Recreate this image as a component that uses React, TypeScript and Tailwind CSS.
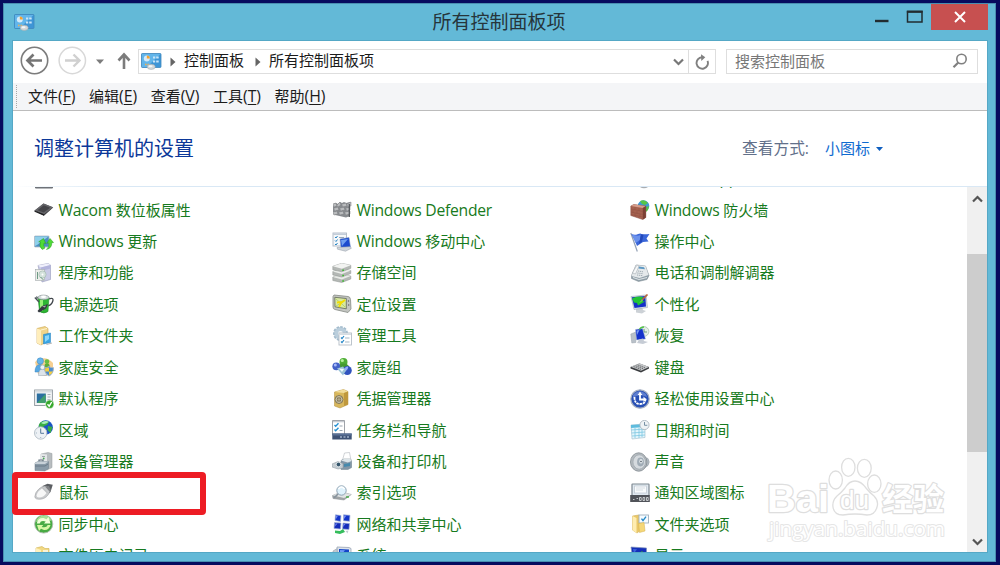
import type { ReactNode } from "react";

const icons: Record<string, ReactNode> = {
  drive: <path d="M1 16h18v2.200q0 1.300-1 1.300H2q-1 0-1-1.300z" fill="#6e7278" />,
  globe: <circle cx="14" cy="12.500" r="6.800" fill="#a9adb2" />,
  tablet: (
    <>
      <path d="M.5 10.800 9.500 3.500l9.700 4-9.200 8.200z" fill="#3c3c3f" />
      <path d="M.5 10.500 9.500 3.500l9.700 3.700-9.200 7z" fill="#66666a" />
      <path d="M3.500 10.200 9.700 5.200l6.500 2.600-6.500 4.800z" fill="#454549" />
      <path d="m.5 10.500 9.500 3.700v1.600l-9.500-4z" fill="#202022" />
    </>
  ),
  update: (
    <>
      <rect x=".5" y="4" width="14.500" height="11" rx=".6" fill="#4b8fc4" stroke="#b4bec6" strokeWidth=".8" />
      <path d="M1 4.500h13.500L3 13l-2 1z" fill="#8fd0ea" />
      <path d="M8.300 17.500Q4.500 14.500 6.500 10l-1.800-.2L9.500 6.500l2.300 5-1.800-.5q-1 2.800 1 5z" fill="#4edb36" stroke="#279c1d" strokeWidth=".5" />
      <path d="M12.500 17.500q3-2.500 2.300-6.500l-2 .3L16 6.500l3.500 4-1.700.2q.2 5.500-5.300 6.800z" fill="#4edb36" stroke="#279c1d" strokeWidth=".5" />
    </>
  ),
  programs: (
    <>
      <path d="m4 2.500 10-2L16.500 2v14.500L8 19z" fill="#c9cbe6" stroke="#9698ba" strokeWidth=".6" />
      <path d="m4 2.500 10-2L16.500 2 7 4.500z" fill="#f0f0fb" />
      <path d="M7 4.500 16.500 2v3.500L7 8z" fill="#b3b4dc" />
      <rect x="1.500" y="6.500" width="9" height="11" fill="#eceeea" stroke="#a4abac" strokeWidth=".6" />
      <circle cx="8.500" cy="11.500" r="3.600" fill="#d4e2dc" stroke="#9bb3a8" strokeWidth=".6" />
      <circle cx="8.500" cy="11.500" r="1" fill="#fff" />
      <path d="M3.500 9v7m3-2 3 3" stroke="#6d9b84" />
    </>
  ),
  power: (
    <>
      <path d="M14.500 5q5.500-2 4.300 2-.8 3.500-4.800 5" fill="none" stroke="#41464b" strokeWidth="1.300" />
      <path d="M4 3.500h11l-1 14q-4 3-8.500 0z" fill="#2db633" stroke="#1d8023" strokeWidth=".5" />
      <path d="M6 6v10l3 1V6z" fill="#97f176" />
      <ellipse cx="9.500" cy="3.400" rx="5.500" ry="2.300" fill="#d5dcdd" stroke="#7c8689" strokeWidth=".6" />
      <ellipse cx="9.500" cy="2.800" rx="2.500" ry="1.200" fill="#fff" />
      <path d="M.8 3.500 5 8M2.500 2.500l1 2" stroke="#4a5158" strokeWidth="1.300" />
      <path d="m8 12 6-2-2 4.500-7 4L3.500 17z" fill="#343940" />
      <path d="m8 12.500 4-1-1 2z" fill="#a5aab0" />
    </>
  ),
  workFolder: (
    <>
      <path d="M3 2.500 11 .5l3 2V15l-7 4-4-2z" fill="#f1d58b" stroke="#cda64e" strokeWidth=".6" />
      <path d="M3 2.500 7 4v15l-4-2z" fill="#ffeebc" />
      <path d="m7 4 6-1.500" stroke="#fff4cf" />
      <path d="M9.500 8.500 16.500 7v9.500L9.500 18z" fill="#3aa5e2" stroke="#1f7dbf" strokeWidth=".5" />
      <path d="m11 10 4-1v4L11 16z" fill="#8bd6fa" />
      <path d="M12.500 18.500 18 17" stroke="#b5b5b5" />
    </>
  ),
  family: (
    <>
      <path d="M1 5q10-8 18 1v8l-7 5-8-2z" fill="#f6cf91" />
      <path d="M1 15q0-7.500 5-7.500t5 7.500z" fill="#56a8e2" stroke="#3d86c0" strokeWidth=".5" />
      <circle cx="6.300" cy="4" r="3.200" fill="#66b6eb" stroke="#3d86c0" strokeWidth=".5" />
      <path d="M10 12q0-6 3-6t3 6z" fill="#5cae38" />
      <circle cx="13" cy="4.500" r="2.300" fill="#66bd42" />
      <path d="M4.500 18.500q0-6.500 4-6.500t4 6.500z" fill="#dce4eb" stroke="#93a1ad" strokeWidth=".5" />
      <circle cx="8.500" cy="10.300" r="2.300" fill="#eef3f7" stroke="#93a1ad" strokeWidth=".5" />
      <path d="M15 9.500q2 1.500 4.500 1.200 0 6-4.500 8.300-4.500-2.300-4.500-8.300Q13 11 15 9.500z" fill="#4a8ccf" stroke="#a9b6c1" />
      <path d="M15 10.500v4h-3.700l-.3-3zM15 14.500h3.700Q18 17 15 18z" fill="#f7cf3e" />
    </>
  ),
  defaults: (
    <>
      <rect x=".6" y="1" width="17.800" height="15.500" fill="#f2f4f5" stroke="#8d969c" strokeWidth=".9" />
      <path d="M1 1.500h17v2H1z" fill="#d7dde1" />
      <rect x="2.800" y="4.500" width="9" height="9.500" fill="#2b6fa0" />
      <path d="m3 14 8.500-9v9z" fill="#41a06c" />
      <path d="M13.500 5.500h3M13.500 8h3M13.500 10.500h3" stroke="#a8b1b8" />
      <circle cx="15.700" cy="15.300" r="4.200" fill="#35a82a" stroke="#dcf0d8" strokeWidth=".7" />
      <path d="m13.500 15.300 1.700 1.900 2.500-4.200" fill="none" stroke="#fff" strokeWidth="1.400" />
    </>
  ),
  region: (
    <>
      <circle cx="11.700" cy="7.500" r="7.200" fill="#1a54c4" />
      <path d="M7 2q5-2 8 0l-2 3-3 1-1 3-4-1q-1-4 2-6zM14 6l4.500 1-2 6-3-3z" fill="#3aae45" />
      <path d="M7 3q4-3.500 8-1.200-4 3.500-8 1.200z" fill="#a8ecbc" />
      <circle cx="6.700" cy="13" r="6.200" fill="#edf1f5" stroke="#a9b5bf" strokeWidth=".8" />
      <path d="M6.700 9v4.300H10" fill="none" stroke="#56789b" />
      <path d="M6.700 8v1M6.700 17v1M1.900 13h1" stroke="#8199ae" strokeWidth=".7" />
    </>
  ),
  devices: (
    <>
      <path d="m7 2 7-1.500 4 1v14L13 18 7 16z" fill="#b8bdc0" stroke="#949a9d" strokeWidth=".5" />
      <path d="m6.500 2 6.500.5V18l-6.500-2z" fill="#e4e7e8" />
      <path d="M8 4.500h3" stroke="#9aa2a6" />
      <circle cx="9.700" cy="6.500" r=".9" fill="#44a750" />
      <path d="M5 10V8h4v2" fill="none" stroke="#5f6f7a" strokeWidth="1.200" />
      <path d="m1 11 3-1.500h10.500v7L11 19l-10-.5z" fill="#8a9ba8" stroke="#6d7d88" strokeWidth=".5" />
      <path d="m1 11 3-1.500h10.500L11 12H1z" fill="#c8d1d8" />
      <path d="M1 14h10l3-2" fill="none" stroke="#6a7b88" />
    </>
  ),
  mouse: (
    <>
      <path d="m8.500 3 5-2.200 5.300 1L16.500 9l-3.500 3z" fill="#5b5e62" />
      <path d="M.8 13.500q.2-4 4.200-7.700Q8 2.500 12.500 3.200L16 8q-2 6.500-8 8-7.200 1.200-7.200-2.500z" fill="#c8cacc" stroke="#97999c" strokeWidth=".5" />
      <path d="M2.500 12.500q1-4.500 5.500-7l4.500 4.500q-3 4.500-7.500 4.500-2.500 0-2.500-2z" fill="#f7f7f7" />
      <path d="m8 4 5.500 6" stroke="#b5b7b9" strokeWidth=".7" />
      <path d="m11 3.500 4.500 5 1.500-1-2-4.500z" fill="#808386" />
    </>
  ),
  sync: (
    <>
      <circle cx="9.700" cy="10" r="9.100" fill="#48ab43" stroke="#b5beb5" strokeWidth=".9" />
      <path d="M2 8q1-6 8-6.500 6 0 7.500 5.500Q10 4 2 8z" fill="#a5e096" />
      <path d="M2.800 9.500Q4 3.800 9.500 4.100l3 1.200L14.500 3l2 6.500H10l1.700-2q-5-1.600-6 2z" fill="#f1ffd8" />
      <path d="M16.500 11Q15 16.500 10 16l-3-1.200L5 17l-2-6h6.300l-1.600 2q5 1.200 6-2z" fill="#d8f8a5" />
    </>
  ),
  history: (
    <>
      <path d="M2 2 8 .5l3 2h4v16H5l-3-3z" fill="#f2d983" stroke="#cfb253" strokeWidth=".6" />
      <path d="m2 2 5 2v15l-5-2z" fill="#fff1bc" />
      <path d="M9 4h5v8H9z" fill="#faf3d7" />
    </>
  ),
  defender: (
    <>
      <path d="m1 4 3-1 2 1 2-2 2 1 2-1 2 1 4-1v14l-4 1.500-13-3z" fill="#888b8f" />
      <path d="m1 4 3-1 1 3-3 1M5 5l3-3 1 3-3 2M10 4l4-1 1 3-4 1M15 4l4-2v4l-3 1M2 8l4-1 1 3-4 1M8 8l4-1 1 3-4 1M14 8l4-1v3l-3 1M1 12l4-1 1 3-4 1M7 12l4-1 1 3-4 1M13 12l5-1v3l-4 1" fill="#babcbe" stroke="#74777a" strokeWidth=".5" />
      <path d="M17.300 4v13" stroke="#55595d" strokeWidth="1.300" />
    </>
  ),
  mobility: (
    <>
      <rect x="1" y="1" width="13.500" height="13" fill="#f6f8fa" stroke="#adb7c3" strokeWidth=".9" />
      <path d="M1 1.500h13V3H1z" fill="#c3cdd8" />
      <path d="m3 5 1 1 1.500-2M3 8.500l1 1 1.500-2M3 12l1 1 1.500-2" fill="none" stroke="#2583c3" />
      <path d="M7 5.500h5" stroke="#7c91a6" strokeWidth=".8" />
      <path d="m8 7 9-1.500 1.500 9.500-9.500.5z" fill="#1b4ace" stroke="#8398c2" strokeWidth=".5" />
      <path d="m9 8 7-1-6 7z" fill="#6f9ff0" />
      <path d="m5 15.500 13-.8 1.500 1.500-6 3-8-2z" fill="#ced4da" stroke="#929ba6" strokeWidth=".5" />
    </>
  ),
  storage: (
    <>
      <path d="m.8 14 9-3 9 2v3l-9 3.500-9-2z" fill="#b4b8b5" stroke="#8d928e" strokeWidth=".5" />
      <path d="m.8 14 9-3 9 2-9 3.500z" fill="#e9ebe8" />
      <path d="m.8 8.500 9-3 9 2v3l-9 3.500-9-2z" fill="#b4b8b5" stroke="#8d928e" strokeWidth=".5" />
      <path d="m.8 8.500 9-3 9 2-9 3.500z" fill="#eceeeb" />
      <path d="m.8 3.300 9-3 9 2v3l-9 3.500-9-2z" fill="#b4b8b5" stroke="#8d928e" strokeWidth=".5" />
      <path d="m.8 3.300 9-3 9 2-9 3.500z" fill="#f2f3f1" />
      <path d="M10.300 7.300h1.600M10.300 12.500h1.600M10.300 18h1.600" stroke="#38b82b" strokeWidth="1.500" />
    </>
  ),
  location: (
    <>
      <path d="M2 1 16 2.500q2 0 2.500 3l.5 9.500-3 3.500-13-3Q1 15 1 13V2.500z" fill="#c3c5c1" stroke="#858a84" strokeWidth=".8" />
      <path d="m2.800 3.300 11.500 1.200v10.300L3 12.800z" fill="#d8e9a0" stroke="#5f6757" strokeWidth=".8" />
      <path d="m4 5 4 3.500L13 6M4 12l5-3 4 4" fill="none" stroke="#a9c66e" strokeWidth=".8" />
      <path d="m5 8.500 4.500-.5L7 13M9 9l4-3" fill="none" stroke="#f4dc00" strokeWidth="1.800" />
      <circle cx="16.500" cy="7" r=".7" fill="#5b605b" />
      <circle cx="16.700" cy="11" r=".7" fill="#5b605b" />
    </>
  ),
  admin: (
    <>
      <circle cx="8.500" cy="7.500" r="6.500" fill="#bed1de" stroke="#a4bccd" strokeWidth="2" strokeDasharray="2.500 1.200" />
      <circle cx="8.500" cy="7.500" r="5.900" fill="#bacedc" />
      <circle cx="8.500" cy="7.500" r="2.400" fill="#f5f8fa" />
      <rect x="7" y="7" width="12.500" height="12" fill="#fff" stroke="#b5bec7" strokeWidth=".9" />
      <path d="M7.500 7.500h11.500V9H7.500z" fill="#d5dde3" />
      <path d="m9 11.500 1 1 2-2.500M9 15.500l1 1 2-2.500" fill="none" stroke="#2386c7" strokeWidth="1.200" />
      <path d="M13 12h4.500M13 16h4.500" stroke="#a5b7c5" />
    </>
  ),
  homegroup: (
    <>
      <circle cx="11.500" cy="5" r="4" fill="#4fae36" />
      <path d="M5.500 12q0-5.500 6-5.500t6 5.500l-5 3z" fill="#459a31" />
      <circle cx="10.300" cy="3.500" r="1.600" fill="#b8ef9e" />
      <circle cx="4.300" cy="9.300" r="3.900" fill="#4261c7" />
      <circle cx="3.300" cy="8" r="1.500" fill="#a7b9fa" />
      <circle cx="15.300" cy="13.500" r="4.500" fill="#3153be" />
      <path d="M11.800 13q1-3.500 4.200-3.500 1 2.500-4 6z" fill="#94aafa" />
      <path d="m5 11.500 6-2 3 4-3 5z" fill="#9bc3d7" />
      <path d="m7 11.500 5 .5-2 3z" fill="#eef9ff" />
    </>
  ),
  credential: (
    <>
      <path d="m2.500 3 9-2.500 4.500 2v13L8 19l-5.500-2z" fill="#d8b75c" stroke="#b08d38" strokeWidth=".5" />
      <path d="m2.500 3 9-2.500 4.500 2L12 4z" fill="#f1dc9a" />
      <path d="m12 4 4-1.500v13L12 17z" fill="#bf983d" />
      <circle cx="7" cy="10.500" r="4" fill="#c9c2a9" stroke="#7a6f50" strokeWidth=".9" />
      <circle cx="7" cy="10.500" r="1.700" fill="#f0ead4" stroke="#6a5e3c" strokeWidth=".9" />
      <path d="m4.500 8 5 5m0-5-5 5" stroke="#766942" strokeWidth=".6" />
    </>
  ),
  taskbar: (
    <>
      <path d="M.5.500h12v14H.5z" fill="#fff" stroke="#94989f" strokeWidth=".9" />
      <path d="M1 1h11v1.300H1z" fill="#c8ccd2" />
      <path d="m2.500 5 1.200 1.300L6.500 3.300M2.500 9.500l1.200 1.300L6.500 7.800" fill="none" stroke="#2791d2" strokeWidth="1.400" />
      <path d="M7.500 6h3M7.500 10.500h3" stroke="#9ba7b1" />
      <path d="M.3 13.500h19.400v6H.3z" fill="#3e5275" />
      <path d="M.3 13.500h19.400v2H.3z" fill="#5a7196" />
      <path d="M8 17h2M11.500 17h2M15 17h2" stroke="#9fb0c8" strokeWidth="1.500" />
    </>
  ),
  printer: (
    <>
      <path d="m10.500 8 2-7 5-.5 1.500 8z" fill="#fff" stroke="#b1b7bc" strokeWidth=".6" />
      <path d="m9 8.500 3-1.500h6.500l1.200 2v6.500L16 17.500H9z" fill="#8297a7" stroke="#71818a" strokeWidth=".5" />
      <path d="m9 8.500 3-1.500h6.500l1.200 2-4 1.500z" fill="#dce4e8" />
      <path d="m0 12 6-2.500 5 2v4.500l-5 1-6-2z" fill="#c5cdd2" stroke="#8a959c" strokeWidth=".5" />
      <circle cx="6.500" cy="12.500" r="2.300" fill="#35556b" stroke="#dce3e7" strokeWidth=".9" />
      <path d="m12 12 6-1v3l-6 1z" fill="#4689ac" />
    </>
  ),
  indexing: (
    <>
      <path d="m.5 12.500 9-3.500 9.800 2.500-7.300 5.500L1 15.500z" fill="#9fa4a6" stroke="#868c90" strokeWidth=".5" />
      <path d="m.5 12.300 9-3.300 9.800 2.500-7.300 3.500z" fill="#e1e4e5" />
      <path d="M14 14h3" stroke="#3aa73a" strokeWidth="1.300" />
      <circle cx="9.500" cy="7.500" r="4.700" fill="#dff2fc" stroke="#8fa3b3" />
      <path d="M6.500 6q3-4 6 0" fill="none" stroke="#fff" strokeWidth="1.300" />
      <path d="m6 11-4 4" stroke="#86929d" strokeWidth="1.700" />
    </>
  ),
  network: (
    <>
      <path d="m3.500.8 5.500.7-.5 6L3 6.500zM11.500.8l6.500.5-.5 6-6-.5z" fill="#1435c8" stroke="#a3b3d6" strokeWidth=".7" />
      <path d="m2.500 8.500 6.500.5-.5 6-6.500-.5zM11 9l6.500.5-.5 6-6.500-.5z" fill="#142cb9" stroke="#a3b3d6" strokeWidth=".7" />
      <path d="m4 1.500 2 .3L4 5zM12 1.500h2.500L12 5zM3.500 9.500h2l-2.500 3zM11.500 10h2l-2.500 3z" fill="#748af2" />
      <path d="m3 16.500 5 .5 3-2 2 3-5 2-5-1z" fill="#35bd5c" />
      <path d="m13.500 17 3-.5-1 3" fill="#c4ccd4" />
    </>
  ),
  system: (
    <>
      <path d="m1 5 5-3v14H1z" fill="#c3cad1" stroke="#99a1aa" strokeWidth=".6" />
      <path d="m5 1 12 .5 2 1v14H6z" fill="#dce3eb" stroke="#9aa5b4" strokeWidth=".8" />
      <path d="m7 3 10 .5v11L7 14z" fill="#1444c9" />
      <path d="m8 4 5 .3-5 6z" fill="#6e9bf5" />
    </>
  ),
  firewall: (
    <>
      <circle cx="13.500" cy="6" r="5.800" fill="#3f9ad4" />
      <path d="M10 1q5-2 8 2l-3 2-3-1zM16 7l3-1-1 4-2 2z" fill="#57c546" />
      <path d="m.8 6 3-1.500 12 1.500v11.500L12.800 19.500l-12-4z" fill="#a5614f" stroke="#83493d" strokeWidth=".5" />
      <path d="m.8 6 3-1.500 12 1.500-3 2z" fill="#d69d8b" />
      <path d="m12.800 8 3-2v11.500l-3 2z" fill="#7c4034" />
      <path d="m1 9 12 2.500M1 12l12 2.500M1 14.500 13 17M5 7v3M9 8v3M3 10v3M7 11v3M5 13v3M10 14v3" stroke="#8f5143" strokeWidth=".5" />
    </>
  ),
  flag: (
    <>
      <path d="M.8 1 7.300 19.500" stroke="#93a1b5" strokeWidth="1.200" />
      <path d="M1.200 2q3.300 1.500 6.300.3t4-.3q3 .5 8 0l-3 4.500 2 3-5.500.5-6 4q-2-6-5.800-12z" fill="#3a66d8" />
      <path d="M2 2.500q5 2 8.500.5l-.5 5-4.500 3z" fill="#6a91ec" />
      <path d="m11 2.500 2.500.2-1.500 7-3 2z" fill="#2449bb" />
    </>
  ),
  phone: (
    <>
      <path d="M6 2 15.500 3l3.500 9.500-2 4-8.500 2-7-3v-3z" fill="#93a2ab" stroke="#75838b" strokeWidth=".5" />
      <path d="m6 2 9.500 1 3 9-9 3-8-2z" fill="#e5e9eb" />
      <path d="m8.500 3.500 5.500.7 1 2-6.500-.7z" fill="#5e99c4" />
      <path d="m3.500 8 3.500-6 2 1-3.500 8-3-1z" fill="#f5f7f8" stroke="#9ba3a9" strokeWidth=".5" />
      <path d="m8 8 5 .8M7.300 10l6 .8M7 12l6 .7" stroke="#97a5ad" strokeWidth=".9" strokeDasharray="1.300 .7" />
      <path d="m3 14.500 6 2 8-2" fill="none" stroke="#dfe4e7" />
    </>
  ),
  personalize: (
    <>
      <path d="m6 14 6-1 1 3 3 1-4 2.500-6-1z" fill="#ccd1d6" />
      <path d="m1 2.500 15-1.500 1.500 12.500L4 15.500z" fill="#dbe1e7" stroke="#a0abb6" strokeWidth=".6" />
      <path d="m1.800 3.300 13.500-1.300.7 10.500L4.500 14z" fill="#1530c8" />
      <path d="M2 4.500q5-3 11.500-1.500l-3.500 4 5 .5-7 4-1-2.500-3-.5z" fill="#22c435" />
      <path d="m17.500.5-6.500 6.500" stroke="#b8683f" strokeWidth="1.700" />
      <path d="m12 5-3 4 4-2z" fill="#60dc50" />
    </>
  ),
  recovery: (
    <>
      <path d="m.8 8 5-2v10.500l-4 .5z" fill="#b9c1c9" stroke="#98a1ab" strokeWidth=".5" />
      <circle cx="14" cy="5.500" r="4.900" fill="#e4eee7" stroke="#a9c3b0" strokeWidth=".8" />
      <path d="M14 3v3h3" fill="none" stroke="#5b8f74" strokeWidth=".9" />
      <path d="m5.500 3.500 7-1L15.500 13l-9 1z" fill="#1432cb" stroke="#b5c3d6" strokeWidth=".5" />
      <path d="m6.500 4.500 3-.5-2.500 5z" fill="#789bf4" />
      <path d="m9 13.500 4-1 1 2.500 4 1-5 2-6-1z" fill="#c6ccd5" />
      <path d="M9.500 3.500q1-2.500 4.500-2.500" fill="none" stroke="#54c34a" strokeWidth="1.400" />
    </>
  ),
  keyboard: (
    <>
      <path d="m.5 10 9-3.500L19 10v1.500l-8 4-10.500-4z" fill="#3a3c3f" />
      <path d="m.5 9.700 9-3.500L19 10l-8 3.700z" fill="#c3c5c7" />
      <path d="m3.500 9.500 7.500 3M5.500 8.700l7.500 3M7.500 7.800l7.500 3" stroke="#636669" strokeWidth=".9" strokeDasharray="1.500 .7" />
    </>
  ),
  ease: (
    <>
      <circle cx="10" cy="10" r="9.200" fill="#2850b5" stroke="#a9b2c2" strokeWidth="1.200" />
      <path d="M3 6Q9-1 16 5l1 3Q9 4 3 9z" fill="#5f7fcf" />
      <path d="M4.500 8q-.2 7 5.500 7t5.500-5.500" fill="none" stroke="#fff" strokeWidth="1.800" strokeDasharray="2.500 .7" />
      <path d="M10 3.500v7h5.500" fill="none" stroke="#fff" strokeWidth="1.800" />
      <path d="m7.500 6 2.500-3 2.500 3zM13.500 7.500l3 3-3 2.500z" fill="#fff" />
    </>
  ),
  date: (
    <>
      <path d="m1 5 14-1v13.500L2 19z" fill="#e3f5fc" stroke="#9dbccb" strokeWidth=".6" />
      <path d="m1 5 14-1v3L1 8z" fill="#5fbcdd" />
      <path d="m1 10 14-1M1.500 13l13.500-1M2 16l13-1M5 8v10M9 8v10M12 7v10" stroke="#7fc8e2" strokeWidth=".8" />
      <circle cx="14.500" cy="5" r="4.600" fill="#eff3f5" stroke="#abb7c1" strokeWidth=".9" />
      <path d="M14.500 2v3.300h2.800" fill="none" stroke="#6a869c" strokeWidth=".9" />
    </>
  ),
  sound: (
    <>
      <path d="m13 4.500 5 2q2.500 3.500 0 7l-5 3.500z" fill="#b2bbc3" stroke="#8f989f" strokeWidth=".5" />
      <ellipse cx="8.700" cy="10" rx="8.200" ry="9.200" fill="#b4babf" stroke="#8b9399" strokeWidth=".9" />
      <ellipse cx="9.200" cy="10" rx="6.300" ry="7.200" fill="#d5dade" stroke="#a0a8ae" strokeWidth=".8" />
      <ellipse cx="10.500" cy="10" rx="3.400" ry="4.400" fill="#a0acb6" />
      <ellipse cx="11" cy="9.200" rx="1.700" ry="2.200" fill="#e1e7ea" />
      <circle cx="11" cy="9.500" r=".8" fill="#4e5b65" />
    </>
  ),
  tray: (
    <>
      <rect x="2" y="1" width="17" height="11.500" rx=".5" fill="#e1e9f0" stroke="#7e8992" strokeWidth="1.200" />
      <rect x="4.500" y="3" width="12" height="7" fill="#f9fbfc" stroke="#bcc7d0" strokeWidth=".7" />
      <path d="M6 5h9M6 7h7" stroke="#c8d3da" strokeWidth=".7" />
      <rect x=".2" y="12" width="19.600" height="7" fill="#505359" />
      <path d="M3 16.500h1.500M6.500 15.500h1.500M9.500 14.500h1.700v3H9.500zM13 14.500h1.700v3H13zM16.500 14.500h1.700v3h-1.700z" fill="none" stroke="#e0e3e5" strokeWidth=".8" />
    </>
  ),
  folderOptions: (
    <>
      <path d="m2.500 2 6-1 2.500 2v13l-4 3-4.500-3z" fill="#e9c768" stroke="#cba749" strokeWidth=".5" />
      <path d="m2.500 2 4 2v15l-4-3z" fill="#ffedb0" />
      <rect x="9" y="1" width="9.500" height="8" fill="#f6fbff" stroke="#9eafbd" strokeWidth=".9" />
      <path d="m11.500 4.700 1.500 2 3-4" fill="none" stroke="#258ac8" strokeWidth="1.400" />
      <path d="m8.500 9.500 5.500-1 1 8.500-5.500 1.500z" fill="#f5d778" stroke="#d4b14d" strokeWidth=".5" />
    </>
  ),
  display: (
    <>
      <path d="m1 1 15.500 1v13L3 14z" fill="#1530b8" stroke="#8092bb" strokeWidth=".7" />
      <path d="m3 3 4 .3-3 4z" fill="#3d62dd" />
      <path d="m7 9 5-4 4 4v5H7z" fill="#38a23f" />
    </>
  ),
};

// listed left to right, row by row
const items: [string, string][] = [
  ["drive", ""], ["", ""], ["globe", "RemoteApp"],
  ["tablet", "Wacom 数位板属性"], ["defender", "Windows Defender"], ["firewall", "Windows 防火墙"],
  ["update", "Windows 更新"], ["mobility", "Windows 移动中心"], ["flag", "操作中心"],
  ["programs", "程序和功能"], ["storage", "存储空间"], ["phone", "电话和调制解调器"],
  ["power", "电源选项"], ["location", "定位设置"], ["personalize", "个性化"],
  ["workFolder", "工作文件夹"], ["admin", "管理工具"], ["recovery", "恢复"],
  ["family", "家庭安全"], ["homegroup", "家庭组"], ["keyboard", "键盘"],
  ["defaults", "默认程序"], ["credential", "凭据管理器"], ["ease", "轻松使用设置中心"],
  ["region", "区域"], ["taskbar", "任务栏和导航"], ["date", "日期和时间"],
  ["devices", "设备管理器"], ["printer", "设备和打印机"], ["sound", "声音"],
  ["mouse", "鼠标"], ["indexing", "索引选项"], ["tray", "通知区域图标"],
  ["sync", "同步中心"], ["network", "网络和共享中心"], ["folderOptions", "文件夹选项"],
  ["history", "文件历史记录"], ["system", "系统"], ["display", "显示"],
];

const menus = [
  ["文件", "F"],
  ["编辑", "E"],
  ["查看", "V"],
  ["工具", "T"],
  ["帮助", "H"],
];

function PanelIcon() {
  return (
    <svg className="h-[17px] w-[21px] shrink-0" viewBox="0 0 21 17">
      <rect x=".5" y=".5" width="19.500" height="14" rx=".8" fill="#3e95d6" stroke="#4088bd" strokeWidth=".8" />
      <path d="M1 1h18.500L6 14H1z" fill="#62b5ea" />
      <circle cx="5.800" cy="5.500" r="3" fill="#d3eafa" />
      <path d="M5.800 5.500V2.500a3 3 0 0 1 3 3z" fill="#f6a12d" />
      <path d="M12 4.500h2.200m1 0h2.500M12 8.500h2.200m1 0h2.500" stroke="#c9e5f8" strokeWidth="1.800" />
      <path d="M4 11.500h1.500M6.500 11.500H8" stroke="#f3b04c" strokeWidth="1.300" />
      <ellipse cx="10.200" cy="13.800" rx="4" ry="2.600" fill="#d3d8da" stroke="#a3abb0" strokeWidth=".6" />
      <ellipse cx="9.500" cy="13.200" rx="2" ry="1" fill="#f4f6f7" />
    </svg>
  );
}

function TitleBar() {
  return (
    <div className="flex h-[37px] items-start">
      <div className="flex w-[28px] pl-[11px] pt-[11px]">
        <PanelIcon />
      </div>
      <h1 className="flex-1 pl-[93px] pt-[5px] text-center text-[19px] leading-7 text-[#26353b]">所有控制面板项</h1>
      <svg className="h-[26px] w-[57px]" viewBox="0 0 57 26">
        <path d="M1 18h13.500" stroke="#222c30" strokeWidth="2.400" />
        <path d="M33.500 9H48v10H33.500z" fill="none" stroke="#222c30" strokeWidth="1.500" />
        <path d="M32.800 8.500h16" stroke="#222c30" strokeWidth="2" />
      </svg>
      <div className="mr-[8px] mt-[1px] flex h-[26px] w-[57px] items-center justify-center bg-[#c75050]">
        <svg className="size-[12px]" viewBox="0 0 12 12">
          <path d="m1 1 10 10M11 1 1 11" stroke="#fff" strokeWidth="2" />
        </svg>
      </div>
    </div>
  );
}

function Crumb() {
  return (
    <svg className="h-[10px] w-[6px]" viewBox="0 0 6 10">
      <path d="m.5.5 5 4.500-5 4.500z" fill="#656565" />
    </svg>
  );
}

function NavBar() {
  return (
    <div className="flex h-[42px] items-start pt-[8px] text-[15px]">
      <svg className="-mt-[4px] h-[32px] w-[125px] shrink-0" viewBox="0 0 125 32" fill="none">
        <circle cx="21.500" cy="15.500" r="13.200" stroke="#7c7c7c" strokeWidth="1.600" />
        <path d="M29 15.500H15M20.500 9.500l-6 6 6 6" stroke="#757575" strokeWidth="2.700" />
        <circle cx="59.300" cy="15.500" r="13.200" stroke="#d8d8d8" strokeWidth="1.500" />
        <path d="M52 15.500h13.500M60.500 9.500l6 6-6 6" stroke="#d0d0d0" strokeWidth="2.400" />
        <path d="M83 14.500h8L87 19z" fill="#7c7c7c" />
        <path d="M111 24V10M105.500 15.500l5.500-6 5.500 6" stroke="#7c7c7c" strokeWidth="2.600" />
      </svg>
      <div className="flex h-[25px] w-[578px] items-center border border-[#dedede] pl-[2px] text-[#1b1b1b]">
        <PanelIcon />
        <span className="ml-[8px] flex items-center gap-[8px]">
          <Crumb />
          <span className="relative -top-px">控制面板</span>
        </span>
        <span className="ml-[11px] flex items-center gap-[8px]">
          <Crumb />
          <span className="relative -top-px">所有控制面板项</span>
        </span>
        <svg className="ml-auto h-[8px] w-[11px]" viewBox="0 0 11 8" fill="none">
          <path d="m1 1.500 4.500 4.500L10 1.500" stroke="#777" strokeWidth="2.200" />
        </svg>
        <div className="ml-[4px] flex h-full w-[27px] items-center justify-center border-l border-[#dedede]">
          <svg className="size-[16px]" viewBox="0 0 16 16" fill="none">
            <path d="M13.500 6.800A5.700 5.700 0 1 1 8 3.300" stroke="#808080" strokeWidth="1.900" />
            <path d="m7 .3 4.300 3L7.300 7z" fill="#808080" />
          </svg>
        </div>
      </div>
      <div className="ml-[10px] flex h-[25px] w-[252px] items-center justify-between border border-[#dedede] pl-[8px] pr-[9px] text-[#777]">
        <span>搜索控制面板</span>
        <svg className="-mt-[2px] size-[16px]" viewBox="0 0 16 16" fill="none">
          <circle cx="9.500" cy="6" r="4.700" stroke="#808080" strokeWidth="1.600" />
          <path d="m6.300 9.500-4.800 4.800" stroke="#808080" strokeWidth="2.200" />
        </svg>
      </div>
    </div>
  );
}

function ItemLabel({ label }: { label: string }) {
  const latin = label.match(/^[A-Za-z ]+/)?.[0] ?? "";
  return (
    <span className="relative -left-[0.5px] -top-[0.5px] whitespace-pre leading-5">
      {latin ? <span className="text-[15.7px] tracking-[-0.25px]">{latin}</span> : null}
      {label.slice(latin.length)}
    </span>
  );
}

function Watermark() {
  return (
    <svg className="pointer-events-none absolute left-[751px] top-[413px] h-[90px] w-[190px]" viewBox="764 454 190 90">
      <g fill="#fff" stroke="#dedede" strokeWidth="1.300">
        <ellipse cx="835.700" cy="480" rx="6.700" ry="9" />
        <ellipse cx="848.300" cy="467.300" rx="6.700" ry="9" />
        <ellipse cx="864.300" cy="468.300" rx="6.900" ry="9" />
        <ellipse cx="874.300" cy="483.700" rx="6.700" ry="8.700" />
        <path d="M855 481q6 0 11 7 3 4 8 8 5 5 3 11-2 8-10 8-6-1-12-1t-12 1q-9 0-10-8-1-6 4-11 4-3 8-8 4-7 10-7z" />
      </g>
      <g className="[paint-order:stroke]" fill="#fff" stroke="#dedede" strokeLinejoin="round" strokeWidth="2.400">
        <text x="767" y="512" fontSize="39" fontWeight="700" fontFamily="Liberation Sans" textLength="62" lengthAdjust="spacingAndGlyphs">Bai</text>
        <text x="840" y="509" fontSize="25" fontWeight="400" fontFamily="Liberation Sans" textLength="29" lengthAdjust="spacingAndGlyphs">du</text>
        <text x="882" y="510" fontSize="31" fontWeight="700" fontFamily="Noto Sans CJK SC" textLength="62">经验</text>
        <text x="769" y="536" fontSize="20" fontFamily="Open Sans" stroke="#e6e6e6" strokeWidth="2" textLength="176" lengthAdjust="spacingAndGlyphs">jingyan.baidu.com</text>
      </g>
    </svg>
  );
}

export default function App() {
  return (
    <div className="h-[565px] w-[1000px] overflow-hidden bg-[#070b5e] pl-[3px] pt-[3px] font-['Open_Sans','Noto_Sans_CJK_SC',sans-serif]">
      <div className="h-[559px] w-[993px] border border-[#4a8fb0] bg-[#63b9d7]">
        <div className="-m-px">
          <TitleBar />
          <div className="relative ml-[9px] flex h-[513px] w-[976px] flex-col border border-[#55a8c6] bg-white">
            <NavBar />
            <div className="flex h-[28px] shrink-0 items-center border-b border-[#bcbcbc] bg-[#f4f5f7] pl-[3px] text-[15px] text-[#1b1b1b]">
              <div className="mr-[11px] h-[23px] border-l border-dotted border-[#a8a8a8]" />
              <div className="flex gap-[13.5px]">
                {menus.map(([label, key]) => (
                  <span key={key} className="whitespace-nowrap">
                    {label}
                    <span className="text-[15.8px]">
                      (<u className="underline-offset-2">{key}</u>)
                    </span>
                  </span>
                ))}
              </div>
            </div>
            <div className="flex h-[75px] shrink-0 items-center pl-[21px]">
              <h2 className="text-[20px] text-[#0c3899]">调整计算机的设置</h2>
              <span className="ml-auto text-[15.7px] text-[#62708a]">查看方式:</span>
              <span className="ml-[16px] mr-[104px] flex items-center gap-[6px] text-[15px] text-[#0f6bd0]">
                小图标
                <svg className="h-[4px] w-[7px]" viewBox="0 0 7 4">
                  <path d="M0 0h7L3.500 4z" fill="#0f5fc0" />
                </svg>
              </span>
            </div>
            <div className="h-px shrink-0 bg-linear-to-r from-white via-[#d9e8f5] via-10% to-[#d9e8f5]" />
            <div className="flex h-[365px] overflow-hidden">
              <div className="-mt-[24px] grid h-[409px] w-[954px] shrink-0 auto-rows-[31.43px] grid-cols-[298px_298px_1fr] pl-[21px]">
                {items.map(([icon, label], i) => (
                  <div key={i} className="flex items-center gap-[5px] text-[15px] text-[#177a20]">
                    <svg className="size-[20px] shrink-0" viewBox="0 0 20 20">
                      {icons[icon]}
                    </svg>
                    <ItemLabel label={label} />
                  </div>
                ))}
              </div>
              <div className="flex w-[20px] shrink-0 flex-col items-center bg-[#f0f0f0]">
                <svg className="mt-[8px] h-[8px] w-[11px]" viewBox="0 0 11 8" fill="none">
                  <path d="m1 6.500 4.500-4.500L10 6.500" stroke="#555" strokeWidth="2.200" />
                </svg>
                <div className="mt-[51px] h-[198px] w-full bg-[#cdcdcd]" />
                <svg className="mb-[6px] mt-auto h-[8px] w-[11px]" viewBox="0 0 11 8" fill="none">
                  <path d="m1 1.500 4.500 4.500L10 1.500" stroke="#555" strokeWidth="2.200" />
                </svg>
              </div>
            </div>
            <div className="absolute -left-px top-[431px] h-[43px] w-[194px] rounded-[4px] border-[6px] border-[#ed1c24]" />
            <Watermark />
          </div>
        </div>
      </div>
    </div>
  );
}
